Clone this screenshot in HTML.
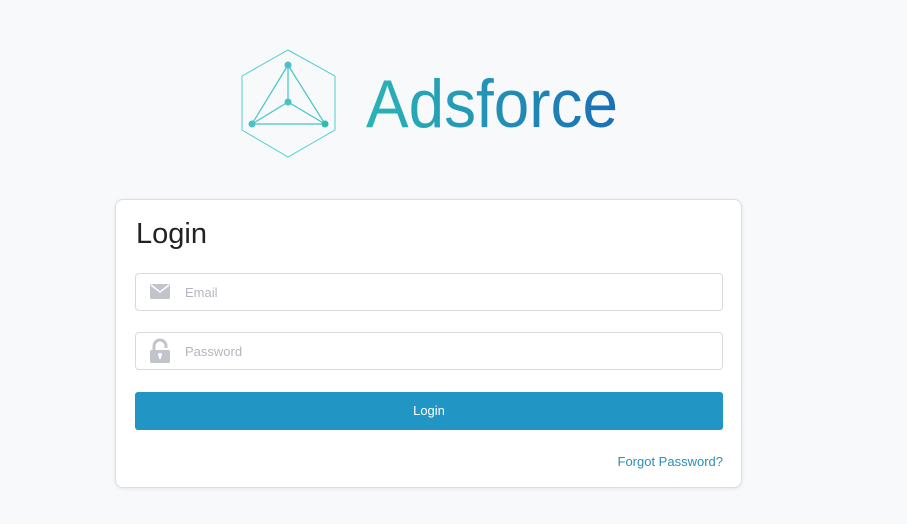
<!DOCTYPE html>
<html><head><meta charset="utf-8"><style>
body{margin:0;width:907px;height:524px;background:#f8f9fb;font-family:"Liberation Sans",sans-serif;position:relative;overflow:hidden}
.card{position:absolute;left:115px;top:199px;width:625px;height:287px;background:#fff;border:1px solid #dcdde2;border-radius:8px;box-shadow:0 1px 4px rgba(0,0,0,.08)}
h1{position:absolute;left:20px;top:18px;margin:0;font-weight:normal;font-size:29px;color:#222}
.inp{position:absolute;left:19px;width:586px;height:36px;border:1px solid #d9dae0;border-radius:4px;background:#fff}
.inp span{position:absolute;left:49px;top:11px;font-size:13px;color:#b3b6c0}
.inp svg{position:absolute;left:13px}
.btn{position:absolute;left:19px;top:192px;width:588px;height:38px;background:#2196c4;border-radius:3px;color:#fff;font-size:13px;text-align:center;line-height:38px}
.fp{position:absolute;right:18px;top:254px;font-size:13px;color:#2a8fb8}
</style></head><body>
<svg width="907" height="180" style="position:absolute;left:0;top:0">
<defs><linearGradient id="g" x1="0" x2="1"><stop offset="0" stop-color="#2ab4b6"/><stop offset="1" stop-color="#1a6fb4"/></linearGradient></defs>
<polygon points="288,50 335,76 335,130 288,157 242,130 242,76" fill="none" stroke="#4fd0d0" stroke-width="1"/>
<g stroke="#45c4c8" stroke-width="1.2" fill="none">
<path d="M288,65 L252,124 L325,124 Z M288,65 L288,102 M288,102 L252,124 M288,102 L325,124"/></g>
<g fill="#48c2c8"><circle cx="288" cy="65" r="3.5"/><circle cx="288" cy="102" r="3.5"/><circle cx="252" cy="124" r="3.5"/><circle cx="325" cy="124" r="3.5" fill="#2ebcb0"/></g>
<text x="366" y="127" font-size="68" font-family="Liberation Sans" fill="url(#g)" textLength="252" lengthAdjust="spacingAndGlyphs">Adsforce</text>
</svg>
<div class="card">
<h1>Login</h1>
<div class="inp" style="top:73px"><svg width="22" height="36"><rect x="1" y="10" width="20" height="15" rx="1.5" fill="#c1c4cb"/><path d="M2,11 L11,18 L20,11" stroke="#fff" stroke-width="1.5" fill="none"/></svg><span>Email</span></div>
<div class="inp" style="top:132px"><svg width="22" height="36"><path d="M5,18 V13 a6,6 0 0 1 12,0 V15" stroke="#c1c4cb" stroke-width="3" fill="none"/><rect x="1" y="17" width="20" height="13" rx="1.5" fill="#c1c4cb"/><circle cx="11" cy="22" r="2" fill="#fff"/><rect x="10" y="22" width="2" height="4" fill="#fff"/></svg><span>Password</span></div>
<div class="btn">Login</div>
<div class="fp">Forgot Password?</div>
</div>
</body></html>
